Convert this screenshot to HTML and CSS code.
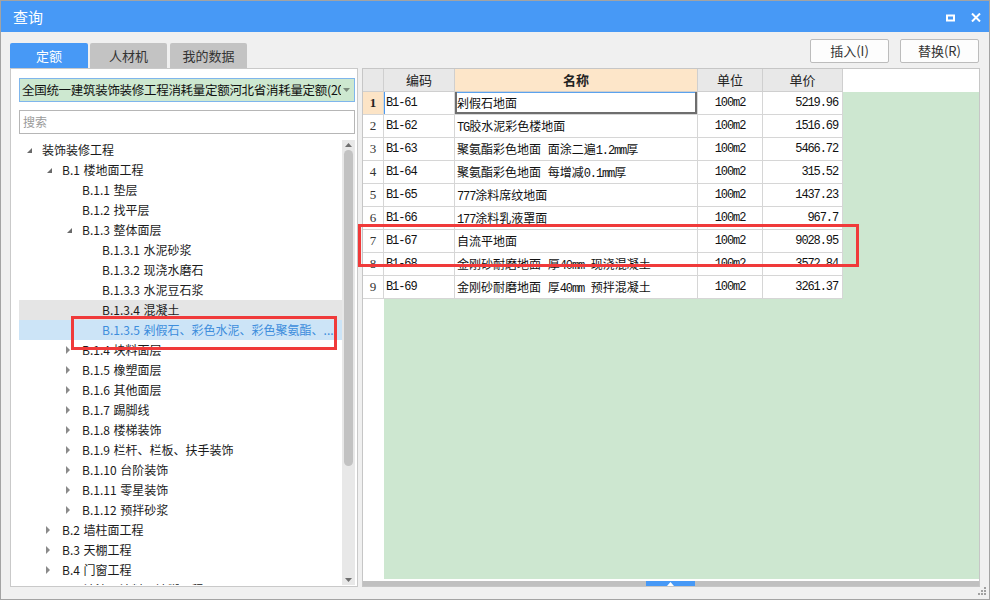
FILE: index.html
```html
<!DOCTYPE html>
<html lang="zh-CN">
<head>
<meta charset="utf-8">
<title>查询</title>
<link rel="stylesheet" href="styles.css">
</head>
<body>
<div class="window">
  <div class="titlebar">
    <span class="title">查询</span>
    <div class="winctl">
      <svg class="ico-max" width="9" height="8" viewBox="0 0 9 8"><rect x="1" y="1.5" width="7" height="5" fill="none" stroke="#fff" stroke-width="2"/></svg>
      <svg class="ico-close" width="10" height="9" viewBox="0 0 10 9"><path d="M1 0.5 L9 8.5 M9 0.5 L1 8.5" stroke="#fff" stroke-width="2"/></svg>
    </div>
  </div>
  <div class="body">
    <div class="left">
      <div class="tabs">
        <div class="tab active">定额</div>
        <div class="tab">人材机</div>
        <div class="tab">我的数据</div>
      </div>
      <div class="panel">
        <div class="combo">
          <span class="combo-text">全国统一建筑装饰装修工程消耗量定额河北省消耗量定额(2012)</span>
          <svg class="combo-arrow" width="7" height="4" viewBox="0 0 7 4"><polygon points="0,0 7,0 3.5,4" fill="#7a8a7c"/></svg>
        </div>
        <div class="search">搜索</div>
        <div class="treewrap">
          <div class="tree">
            <div class="row l0"><span class="tog"><svg width="5" height="5" viewBox="0 0 5 5"><polygon points="5,0 5,5 0,5" fill="#6a6a6a"/></svg></span><span class="lbl">装饰装修工程</span></div>
            <div class="row l1"><span class="tog"><svg width="5" height="5" viewBox="0 0 5 5"><polygon points="5,0 5,5 0,5" fill="#6a6a6a"/></svg></span><span class="lbl">B.1 楼地面工程</span></div>
            <div class="row l2"><span class="tog"></span><span class="lbl">B.1.1 垫层</span></div>
            <div class="row l2"><span class="tog"></span><span class="lbl">B.1.2 找平层</span></div>
            <div class="row l2"><span class="tog"><svg width="5" height="5" viewBox="0 0 5 5"><polygon points="5,0 5,5 0,5" fill="#6a6a6a"/></svg></span><span class="lbl">B.1.3 整体面层</span></div>
            <div class="row l3"><span class="tog"></span><span class="lbl">B.1.3.1 水泥砂浆</span></div>
            <div class="row l3"><span class="tog"></span><span class="lbl">B.1.3.2 现浇水磨石</span></div>
            <div class="row l3"><span class="tog"></span><span class="lbl">B.1.3.3 水泥豆石浆</span></div>
            <div class="row l3 hover"><span class="tog"></span><span class="lbl">B.1.3.4 混凝土</span></div>
            <div class="row l3 selected"><span class="tog"></span><span class="lbl">B.1.3.5 剁假石、彩色水泥、彩色聚氨酯、...</span></div>
            <div class="row l2 c"><span class="tog"><svg width="4" height="8" viewBox="0 0 4 8"><polygon points="0,0 4,4 0,8" fill="#8a8a8a"/></svg></span><span class="lbl">B.1.4 块料面层</span></div>
            <div class="row l2 c"><span class="tog"><svg width="4" height="8" viewBox="0 0 4 8"><polygon points="0,0 4,4 0,8" fill="#8a8a8a"/></svg></span><span class="lbl">B.1.5 橡塑面层</span></div>
            <div class="row l2 c"><span class="tog"><svg width="4" height="8" viewBox="0 0 4 8"><polygon points="0,0 4,4 0,8" fill="#8a8a8a"/></svg></span><span class="lbl">B.1.6 其他面层</span></div>
            <div class="row l2 c"><span class="tog"><svg width="4" height="8" viewBox="0 0 4 8"><polygon points="0,0 4,4 0,8" fill="#8a8a8a"/></svg></span><span class="lbl">B.1.7 踢脚线</span></div>
            <div class="row l2 c"><span class="tog"><svg width="4" height="8" viewBox="0 0 4 8"><polygon points="0,0 4,4 0,8" fill="#8a8a8a"/></svg></span><span class="lbl">B.1.8 楼梯装饰</span></div>
            <div class="row l2 c"><span class="tog"><svg width="4" height="8" viewBox="0 0 4 8"><polygon points="0,0 4,4 0,8" fill="#8a8a8a"/></svg></span><span class="lbl">B.1.9 栏杆、栏板、扶手装饰</span></div>
            <div class="row l2 c"><span class="tog"><svg width="4" height="8" viewBox="0 0 4 8"><polygon points="0,0 4,4 0,8" fill="#8a8a8a"/></svg></span><span class="lbl">B.1.10 台阶装饰</span></div>
            <div class="row l2 c"><span class="tog"><svg width="4" height="8" viewBox="0 0 4 8"><polygon points="0,0 4,4 0,8" fill="#8a8a8a"/></svg></span><span class="lbl">B.1.11 零星装饰</span></div>
            <div class="row l2 c"><span class="tog"><svg width="4" height="8" viewBox="0 0 4 8"><polygon points="0,0 4,4 0,8" fill="#8a8a8a"/></svg></span><span class="lbl">B.1.12 预拌砂浆</span></div>
            <div class="row l1 c"><span class="tog"><svg width="4" height="8" viewBox="0 0 4 8"><polygon points="0,0 4,4 0,8" fill="#8a8a8a"/></svg></span><span class="lbl">B.2 墙柱面工程</span></div>
            <div class="row l1 c"><span class="tog"><svg width="4" height="8" viewBox="0 0 4 8"><polygon points="0,0 4,4 0,8" fill="#8a8a8a"/></svg></span><span class="lbl">B.3 天棚工程</span></div>
            <div class="row l1 c"><span class="tog"><svg width="4" height="8" viewBox="0 0 4 8"><polygon points="0,0 4,4 0,8" fill="#8a8a8a"/></svg></span><span class="lbl">B.4 门窗工程</span></div>
            <div class="row l1 c"><span class="tog"><svg width="4" height="8" viewBox="0 0 4 8"><polygon points="0,0 4,4 0,8" fill="#8a8a8a"/></svg></span><span class="lbl">B.5 油漆、涂料、裱糊工程</span></div>
          </div>
          <div class="vscroll">
            <div class="vs-arrow"><svg width="7" height="4" viewBox="0 0 7 4"><polygon points="3.5,0 7,4 0,4" fill="#6f6f6f"/></svg></div>
            <div class="vs-track"><div class="vs-thumb"></div></div>
            <div class="vs-arrow"><svg width="7" height="4" viewBox="0 0 7 4"><polygon points="0,0 7,0 3.5,4" fill="#6f6f6f"/></svg></div>
          </div>
        </div>
      </div>
    </div>
    <div class="right">
      <div class="toolbar">
        <button class="btn">插入(I)</button>
        <button class="btn">替换(R)</button>
      </div>
      <div class="table">
        <div class="grid">
          <div class="hc"></div><div class="hc">编码</div><div class="hc name">名称</div><div class="hc">单位</div><div class="hc">单价</div><div class="hc blank"></div>

          <div class="num first">1</div><div class="cell code rowsel">B1-61</div><div class="cell nm cur">剁假石地面</div><div class="cell unit">100m2</div><div class="cell price">5219.96</div><div class="cell green"></div>
          <div class="num">2</div><div class="cell code">B1-62</div><div class="cell nm"><span class="a">TG</span>胶水泥彩色楼地面</div><div class="cell unit">100m2</div><div class="cell price">1516.69</div><div class="cell green"></div>
          <div class="num">3</div><div class="cell code">B1-63</div><div class="cell nm">聚氨酯彩色地面 面涂二遍<span class="a">1.2mm</span>厚</div><div class="cell unit">100m2</div><div class="cell price">5466.72</div><div class="cell green"></div>
          <div class="num">4</div><div class="cell code">B1-64</div><div class="cell nm">聚氨酯彩色地面 每增减<span class="a">0.1mm</span>厚</div><div class="cell unit">100m2</div><div class="cell price">315.52</div><div class="cell green"></div>
          <div class="num">5</div><div class="cell code">B1-65</div><div class="cell nm"><span class="a">777</span>涂料席纹地面</div><div class="cell unit">100m2</div><div class="cell price">1437.23</div><div class="cell green"></div>
          <div class="num">6</div><div class="cell code">B1-66</div><div class="cell nm"><span class="a">177</span>涂料乳液罩面</div><div class="cell unit">100m2</div><div class="cell price">967.7</div><div class="cell green"></div>
          <div class="num">7</div><div class="cell code">B1-67</div><div class="cell nm">自流平地面</div><div class="cell unit">100m2</div><div class="cell price">9028.95</div><div class="cell green"></div>
          <div class="num">8</div><div class="cell code">B1-68</div><div class="cell nm">金刚砂耐磨地面 厚<span class="a">40mm</span> 现浇混凝土</div><div class="cell unit">100m2</div><div class="cell price">3572.84</div><div class="cell green"></div>
          <div class="num">9</div><div class="cell code">B1-69</div><div class="cell nm">金刚砂耐磨地面 厚<span class="a">40mm</span> 预拌混凝土</div><div class="cell unit">100m2</div><div class="cell price">3261.37</div><div class="cell green"></div>
        </div>
        <div class="fill"><div class="fill-num"></div><div class="fill-green"></div></div>
        <div class="hscroll">
          <div class="hs-btn"><svg width="7" height="4" viewBox="0 0 7 4"><polygon points="3.5,0 7,4 0,4" fill="#fff"/></svg></div>
        </div>
      </div>
    </div>
  </div>
  <svg class="grip" width="8" height="8" viewBox="0 0 8 8" fill="#a0a0a0">
    <rect x="6" y="0" width="2" height="2"/>
    <rect x="3" y="3" width="2" height="2"/><rect x="6" y="3" width="2" height="2"/>
    <rect x="0" y="6" width="2" height="2"/><rect x="3" y="6" width="2" height="2"/><rect x="6" y="6" width="2" height="2"/>
  </svg>
  <div class="mark mark-tree"></div>
  <div class="mark mark-row"></div>
</div>
</body>
</html>
```

FILE: styles.css
```css
* { box-sizing: border-box; }
html, body { margin: 0; padding: 0; }
body {
  width: 990px;
  height: 600px;
  overflow: hidden;
  background: #f0f0f0;
  font-family: "Noto Sans CJK SC", "Noto Sans", sans-serif;
  color: #1e1e1e;
}
.window {
  position: relative;
  width: 990px;
  height: 600px;
  border: 1px solid #a3a3a3;
  background: #f0f0f0;
  display: flex;
  flex-direction: column;
}
.titlebar {
  height: 31px;
  background: #4799f6;
  display: flex;
  align-items: center;
  justify-content: space-between;
  padding: 0 8px 0 12px;
  flex: none;
}
.title {
  color: #fff;
  font-size: 15px;
  line-height: 20px;
  margin-top: 1px;
}
.winctl {
  display: flex;
  align-items: center;
  gap: 16px;
  margin-top: 2px;
}
.ico-max, .ico-close { display: block; }

.body {
  flex: 1;
  display: flex;
  gap: 4px;
  padding: 0 9px;
}
.left {
  width: 348px;
  display: flex;
  flex-direction: column;
}
.tabs {
  margin-top: 11px;
  height: 25px;
  display: flex;
  gap: 2px;
}
.tab {
  width: 78px;
  height: 25px;
  background: #c3c3c3;
  color: #333;
  font-size: 13px;
  line-height: 25px;
  text-align: center;
  border-radius: 2px 2px 0 0;
}
.tab + .tab { width: 77px; }
.tab + .tab + .tab { margin-left: 1px; }
.tab.active {
  background: #4799f6;
  color: #fff;
}
.panel {
  height: 519px;
  background: #fff;
  border: 1px solid #c9c9c9;
  padding: 9px 2px 1px 8px;
  display: flex;
  flex-direction: column;
}
.combo {
  height: 24px;
  background: #cde8d0;
  border: 1px solid #7fb6ec;
  display: flex;
  align-items: center;
  padding: 0 4px 0 2px;
  overflow: hidden;
  flex: none;
}
.combo-text {
  flex: 1;
  white-space: nowrap;
  overflow: hidden;
  font-size: 12.5px;
  letter-spacing: -0.3px;
  line-height: 22px;
  color: #111;
}
.combo-arrow { flex: none; margin-left: 2px; }
.search {
  margin-top: 8px;
  height: 24px;
  border: 1px solid #b6b6b6;
  font-size: 12px;
  line-height: 22px;
  color: #9a9a9a;
  padding-left: 3px;
  flex: none;
}
.treewrap {
  margin-top: 6px;
  flex: 1;
  display: flex;
  overflow: hidden;
}
.tree {
  width: 323px;
  overflow: hidden;
}
.row {
  height: 20px;
  display: flex;
  align-items: center;
  font-size: 12px;
  white-space: nowrap;
  color: #1b1b1b;
  word-spacing: 1px;
}
.row.l1 { padding-left: 20px; }
.row.l2 { padding-left: 40px; }
.row.l3 { padding-left: 60px; }
.tog {
  width: 23px;
  flex: none;
  display: flex;
  justify-content: flex-end;
  align-items: center;
  padding-right: 10px;
  height: 20px;
}
.row.c .tog { padding-right: 12px; }
.tog svg { display: block; }
.lbl { line-height: 20px; }
.row.hover { background: #e5e5e5; }
.row.selected { background: #cce4f7; color: #3c8ddc; }
.vscroll {
  width: 13px;
  background: #e8e8e8;
  display: flex;
  flex-direction: column;
}
.vs-arrow {
  height: 10px;
  display: flex;
  align-items: center;
  justify-content: center;
  flex: none;
}
.vs-track { flex: 1; padding: 0 2px; }
.vs-thumb {
  height: 316px;
  background: #c2c2c2;
  border-radius: 5px;
}

.right {
  width: 618px;
  display: flex;
  flex-direction: column;
}
.toolbar {
  margin-top: 7px;
  height: 24px;
  display: flex;
  justify-content: flex-end;
  gap: 11px;
  padding-right: 1px;
}
.btn {
  width: 79px;
  height: 24px;
  background: #fdfdfd;
  border: 1px solid #bcbcbc;
  border-radius: 2px;
  font-family: "Noto Sans CJK SC", "Noto Sans", sans-serif;
  font-size: 13px;
  color: #333;
  padding: 0;
  line-height: 22px;
}
.table {
  margin-top: 5px;
  height: 519px;
  border: 1px solid #c6c6c6;
  background: #fff;
  display: flex;
  flex-direction: column;
}
.grid {
  display: grid;
  grid-template-columns: 21px 71px 243px 65px 80px 1fr;
  grid-auto-rows: 23px;
  flex: none;
}
.hc {
  background: #e8e8e8;
  border-right: 1px solid #cfcfcf;
  border-bottom: 1px solid #cfcfcf;
  font-size: 13px;
  line-height: 22px;
  text-align: center;
  color: #222;
}
.hc.name { background: #fde6c9; font-weight: bold; }
.hc.blank { background: #fff; border: none; }
.num, .cell {
  border-right: 1px solid #d6d6d6;
  border-bottom: 1px solid #d6d6d6;
  line-height: 22px;
  white-space: nowrap;
  overflow: hidden;
}
.num {
  background: #fff;
  text-align: center;
  font-family: "Liberation Serif", serif;
  font-size: 13px;
  color: #333;
}
.num.first { background: #fce4c6; font-weight: bold; color: #222; }
.cell { font-size: 12px; color: #111; }
.nm { word-spacing: 4px; }
.code, .unit, .price, .a {
  font-family: "Liberation Mono", monospace;
  font-size: 12px;
  letter-spacing: -1.1px;
  word-spacing: 0;
}
.code { padding-left: 2px; }
.nm { padding-left: 2px; }
.unit { text-align: center; }
.price { text-align: right; padding-right: 4px; }
.cell.green { background: #cde7d0; border: none; }
.cell.rowsel { box-shadow: inset 1px 0 #4c9af0; }
.cell.cur {
  box-shadow: inset 2px 0 #6e6e6e, inset -2px 0 #6e6e6e, inset 0 -2px #6e6e6e, inset 0 1px #5aa2ee;
}
.fill {
  flex: 1;
  display: flex;
  border-bottom: 2px solid #fff;
}
.fill-num { width: 21px; background: #fff; }
.fill-green { flex: 1; background: #cde7d0; }
.hscroll {
  height: 5px;
  background: #c0c0c0;
  display: flex;
  padding-left: 283px;
  flex: none;
}
.hs-btn {
  width: 49px;
  height: 5px;
  background: #4799f6;
  display: flex;
  justify-content: center;
  align-items: flex-start;
  padding-top: 1px;
}
.hs-btn svg { display: block; }

.grip {
  position: absolute;
  left: 977px;
  top: 586px;
}
.mark {
  position: absolute;
  border: 3px solid #f03a3a;
}
.mark-tree { left: 70px; top: 315px; width: 266px; height: 34px; }
.mark-row { left: 357px; top: 223px; width: 501px; height: 43px; }
```
